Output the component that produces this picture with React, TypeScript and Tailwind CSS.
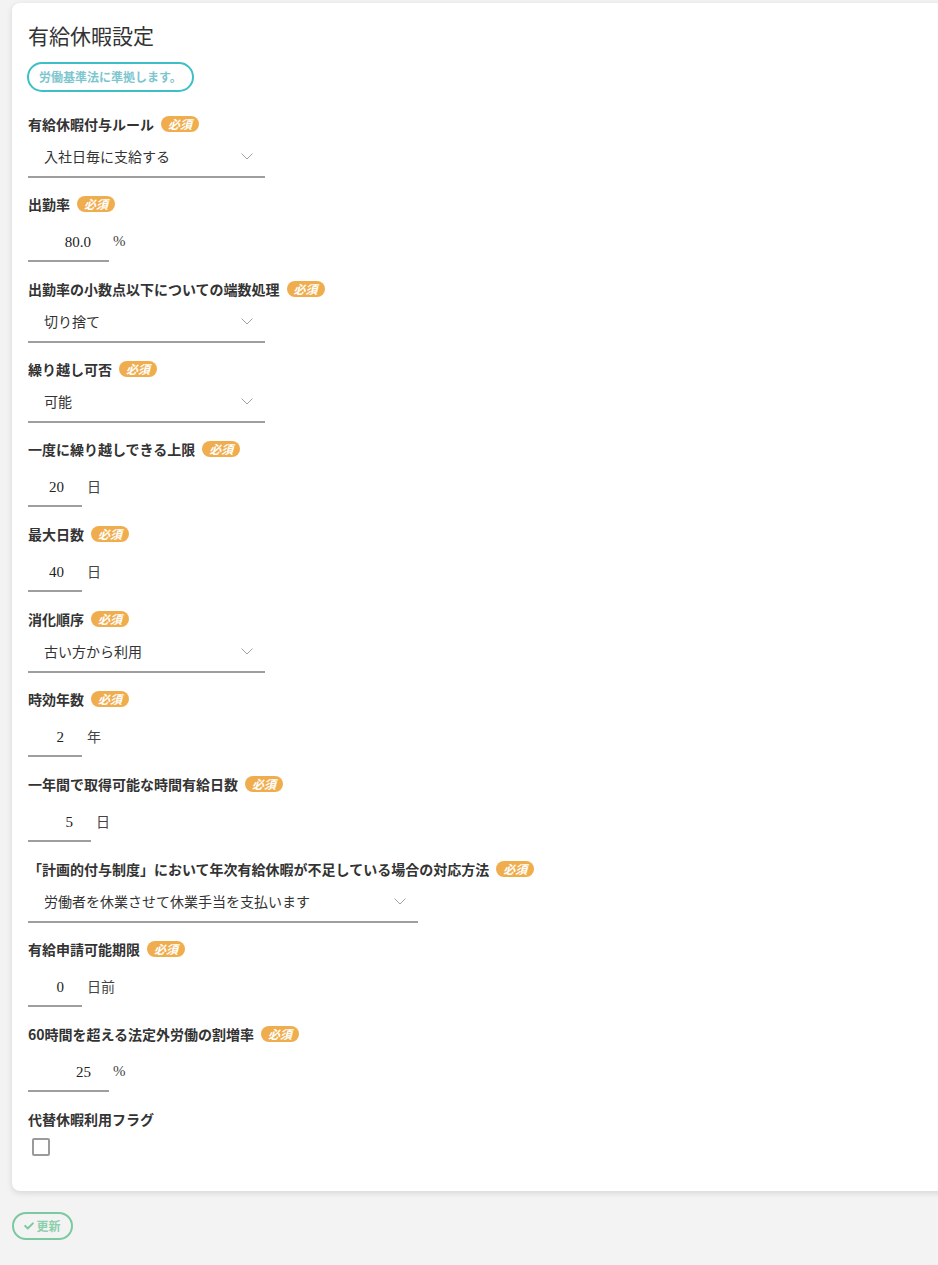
import React from "react";
import { FaCheck } from "react-icons/fa";

const SANS = "font-['Noto_Sans_CJK_JP','Noto_Sans',sans-serif]";

function Badge() {
  return (
    <span className="ml-[7px] inline-flex h-4 w-[38px] items-center justify-center rounded-full bg-[#f0ad4e] text-[12px] font-bold italic leading-none text-white">
      必須
    </span>
  );
}

function Label({ text, required = true }: { text: string; required?: boolean }) {
  return (
    <div className="flex h-5 items-center text-[14px] font-bold leading-5 text-[#333]">
      <span>{text}</span>
      {required && <Badge />}
    </div>
  );
}

function Chevron() {
  return (
    <svg width="12" height="7" viewBox="0 0 12 7" fill="none">
      <polyline points="0.5,0.5 6,6 11.5,0.5" stroke="#a0a0a0" strokeWidth="1" />
    </svg>
  );
}

function SelectField({ label, value, wide = false }: { label: string; value: string; wide?: boolean }) {
  return (
    <div className="mb-4">
      <Label text={label} />
      <div
        className={`mt-1 flex h-10 items-center justify-between border-b-2 border-[#9e9e9e] pb-[1px] pl-4 pr-3 ${
          wide ? "w-[390px]" : "w-[237px]"
        }`}
      >
        <span className="text-[14px] text-[#333]">{value}</span>
        <Chevron />
      </div>
    </div>
  );
}

function NumberField({
  label,
  value,
  unit,
  width,
  serifUnit = false,
}: {
  label: string;
  value: string;
  unit: string;
  width: string;
  serifUnit?: boolean;
}) {
  return (
    <div className="mb-[17px]">
      <Label text={label} />
      <div className="mt-2 flex items-center">
        <div className={`flex h-10 items-center justify-end border-b-2 border-[#9e9e9e] pr-[18px] pt-[3px] ${width}`}>
          <span className="font-['Liberation_Serif',serif] text-[15px] text-[#222]">{value}</span>
        </div>
        <span
          className={`pb-[1px] text-[#444] ${
            serifUnit ? "ml-[4px] font-['Liberation_Serif',serif] text-[15px]" : "ml-[5px] text-[14px]"
          }`}
        >
          {unit}
        </span>
      </div>
    </div>
  );
}

export default function App() {
  return (
    <div className={`${SANS} min-h-[1265px] overflow-hidden bg-[#f3f3f3] pt-[3px]`}>
      <div className="ml-[12px] w-[960px] rounded-lg bg-white pb-[35px] pl-4 pt-[17px] shadow-[0_2px_6px_rgba(0,0,0,0.12)]">
        <h1 className="text-[21px] font-normal leading-[30px] text-[#333]">有給休暇設定</h1>
        <div className="-ml-px mt-3 inline-flex h-[30px] items-center rounded-full border-2 border-[#3dbfc8] px-[10px] text-[12px] font-bold text-[#7cc6cf]">
          労働基準法に準拠します。
        </div>
        <div className="mt-[22px]">
          <SelectField label="有給休暇付与ルール" value="入社日毎に支給する" />
          <NumberField label="出勤率" value="80.0" unit="%" width="w-[81px]" serifUnit />
          <SelectField label="出勤率の小数点以下についての端数処理" value="切り捨て" />
          <SelectField label="繰り越し可否" value="可能" />
          <NumberField label="一度に繰り越しできる上限" value="20" unit="日" width="w-[54px]" />
          <NumberField label="最大日数" value="40" unit="日" width="w-[54px]" />
          <SelectField label="消化順序" value="古い方から利用" />
          <NumberField label="時効年数" value="2" unit="年" width="w-[54px]" />
          <NumberField label="一年間で取得可能な時間有給日数" value="5" unit="日" width="w-[63px]" />
          <SelectField
            label="「計画的付与制度」において年次有給休暇が不足している場合の対応方法"
            value="労働者を休業させて休業手当を支払います"
            wide
          />
          <NumberField label="有給申請可能期限" value="0" unit="日前" width="w-[54px]" />
          <NumberField label="60時間を超える法定外労働の割増率" value="25" unit="%" width="w-[81px]" serifUnit />
          <div>
            <Label text="代替休暇利用フラグ" required={false} />
            <div className="ml-1 mt-[9px] h-[18px] w-[18px] rounded-[2px] border-2 border-[#9a9a9a]" />
          </div>
        </div>
      </div>
      <div className="ml-[12px] mt-[21px] inline-flex h-[28px] w-[61px] items-center justify-center gap-[2px] rounded-full border-2 border-[#7cc9a0] text-[12px] font-bold text-[#8ccfac]">
        <FaCheck className="text-[10px] text-[#7cc9a0]" />
        <span>更新</span>
      </div>
    </div>
  );
}
